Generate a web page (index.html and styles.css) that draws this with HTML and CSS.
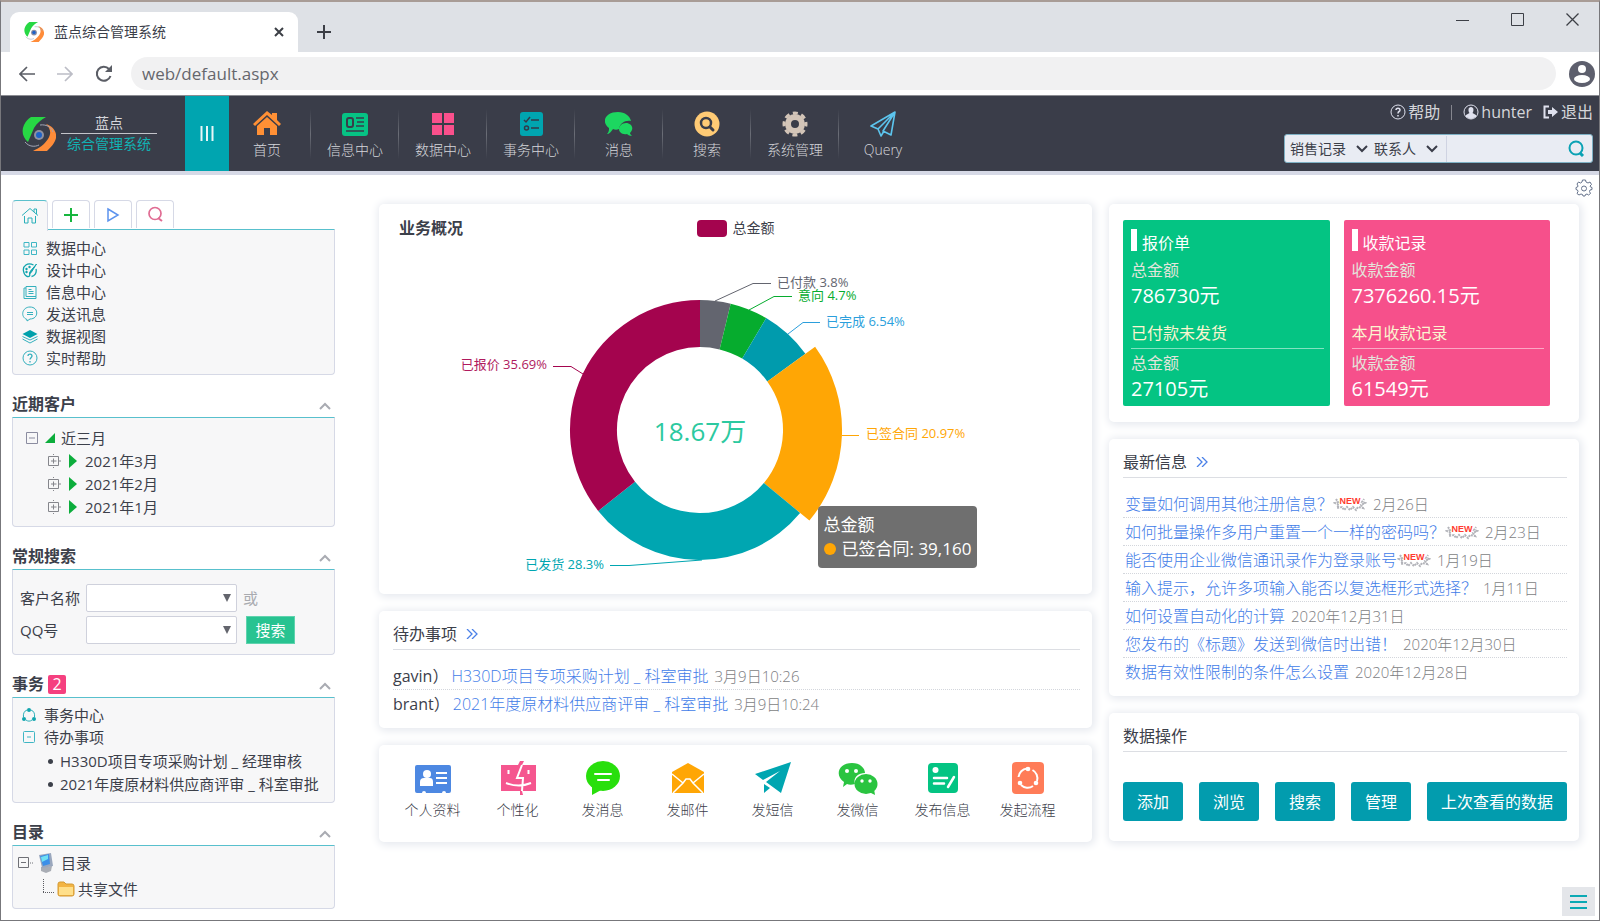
FILE: index.html
```
<!DOCTYPE html>
<html lang="zh-CN">
  <head>
    <meta charset="utf-8">
    <title>蓝点综合管理系统</title>
    <link rel="stylesheet" href="styles.css">
  </head>
  <body>
    <svg class="defs">
      <symbol id="logo" viewBox="0 0 34 34">
        <path fill="#27d844" d="M9 0H24C19 3 15 6 12 11L6 25C1 21-1 14 2 8 4 4 6 2 9 0z"/>
        <path fill="#ff8c39" d="M24 7C31 9 35 15 34 21 33 26 29 30 25 34H11C17 31 22 28 26 22 30 16 28 11 24 7z"/>
        <path fill="none" stroke="#a3a6b5" d="M3 25C7 30 13 30 17 28M18 8C25 7 30 11 31 15"/>
        <circle cx="17" cy="18" r="5" fill="#8d91a3"/>
        <circle cx="17" cy="18" r="3" fill="#1f62c8"/>
      </symbol>
      <symbol id="more" viewBox="0 0 12 10">
        <path fill="none" stroke="#4a80e8" stroke-width="1.300" d="M1 0L6 5 1 10M6 0L11 5 6 10"/>
      </symbol>
      <symbol id="fold" viewBox="0 0 12 8">
        <path fill="none" stroke="#a9abb2" stroke-width="2" d="M1 7L6 2 11 7"/>
      </symbol>
      <symbol id="plusbox" viewBox="0 0 14 14">
        <path fill="none" stroke="#85868c" d="M1.500 2.500H11.500V11.500H1.500zM6.500 0V1M6.500 13V14M12 7H14M4 7H9.500M6.500 4.500V9.500"/>
      </symbol>
      <symbol id="spikes" viewBox="0 0 34 16">
        <path fill="none" stroke="#b3b4ba" stroke-width="2" stroke-dasharray="2 1" d="M3 3L5 6 2 7 6 9 4 12 9 11 11 14 14 11 17 14 20 11 23 14 25 11 30 12 28 9 32 7 29 6 31 3"/>
      </symbol>
    </svg>

    <div class="window">
      <div class="tabstrip">
        <div class="browser-tab">
          <svg width="20" height="20"><use href="#logo"/></svg>
          <span>蓝点综合管理系统</span>
          <button class="plain" aria-label="关闭标签"><svg width="10" height="10"><path d="M1 1L9 9M9 1L1 9" stroke="#3c3f46" stroke-width="2"/></svg></button>
        </div>
        <button class="plain newtab" aria-label="新标签"><svg width="14" height="14"><path d="M7 0V14M0 7H14" stroke="#3c3f46" stroke-width="2"/></svg></button>
        <div class="window-buttons">
          <button class="plain" aria-label="最小化"><svg width="13" height="13"><path d="M0 7.500H13" stroke="#3c3f46"/></svg></button>
          <button class="plain" aria-label="最大化"><svg width="13" height="13"><path d="M.5.5H12.500V12.500H.5z" fill="none" stroke="#3c3f46"/></svg></button>
          <button class="plain" aria-label="关闭"><svg width="13" height="13"><path d="M.5.5L12.500 12.500M12.500.5L.5 12.500" stroke="#3c3f46" stroke-width="1.300"/></svg></button>
        </div>
      </div>
      <div class="addressbar">
        <button class="plain" aria-label="后退"><svg width="16" height="16"><path d="M16 8H1M8 1L1 8 8 15" fill="none" stroke="#5b5e66" stroke-width="1.700"/></svg></button>
        <button class="plain" aria-label="前进"><svg width="16" height="16"><path d="M0 8H15M8 1L15 8 8 15" fill="none" stroke="#bcbdc6" stroke-width="1.700"/></svg></button>
        <button class="plain" aria-label="刷新"><svg width="18" height="18"><path d="M14 4A7 7 0 1 0 15.500 11" fill="none" stroke="#5b5e66" stroke-width="2"/><path d="M17 0V7H10z" fill="#5b5e66"/></svg></button>
        <input class="url" type="text" value="web/default.aspx" aria-label="地址">
        <button class="plain" aria-label="用户"><svg width="26" height="26"><circle cx="13" cy="13" r="13" fill="#5d5f6d"/><circle cx="13" cy="8" r="4" fill="#fff"/><ellipse cx="13" cy="18" rx="8" ry="4" fill="#fff"/></svg></button>
      </div>

      <header class="topbar">
        <a class="brand" href="#">
          <svg width="34" height="34"><use href="#logo"/></svg>
          <span class="brand-text"><span>蓝点</span><span class="brand-sub">综合管理系统</span></span>
        </a>
        <button class="collapse" aria-label="收起菜单"><svg width="14" height="16"><path d="M1.500 0V15M7 0V15M12.500 0V15" stroke="#e8f6f7" stroke-width="2"/></svg></button>
        <nav class="mainnav">
          <a href="#">
            <svg width="28" height="26" viewBox="0 0 28 26"><path fill="#ff9035" d="M19 2H24V9L28 13 26 15 14 4 2 15 0 13 14 0 19 4zM14 6L24 15V24H17V17H11V24H4V15z"/></svg>
            首页
          </a>
          <a href="#">
            <svg width="28" height="26" viewBox="0 0 28 26"><rect x="1" y="2" width="26" height="23" rx="3" fill="#06c384"/><rect x="6" y="7" width="6" height="9" rx="2" fill="none" stroke="#3a3d49" stroke-width="2"/><path d="M15 7H23M16 11H23M15 15H23M5 20H23" stroke="#3a3d49" stroke-width="1.500"/></svg>
            信息中心
          </a>
          <a href="#">
            <svg width="28" height="26" viewBox="0 0 28 26"><path fill="#fa508c" d="M3 2H13V12H3zM15 2H25V12H15zM3 14H13V24H3zM15 14H25V24H15z"/></svg>
            数据中心
          </a>
          <a href="#">
            <svg width="28" height="26" viewBox="0 0 28 26"><rect x="3" y="1" width="23" height="24" rx="3" fill="#00a5b0"/><path d="M7 9L9 11 13 6M14 9H22M14 17H22" fill="none" stroke="#323a48" stroke-width="1.500"/><circle cx="9.500" cy="17" r="2" fill="none" stroke="#323a48" stroke-width="1.500"/></svg>
            事务中心
          </a>
          <a href="#">
            <svg width="28" height="26" viewBox="0 0 28 26"><path fill="#1cd760" d="M13 1C20 1 25 5 26 10 20 9 15 12 14 18 12 19 10 19 8 18 6 21 4 23 2 23 4 21 4 19 4 17-4 11 0 1 13 1z"/><path fill="#1cd760" d="M21 12C26 12 30 17 25 22 25 23 26 24 27 25 25 25 23 24 22 23 17 24 14 21 14 18 14 15 17 12 21 12z"/></svg>
            消息
          </a>
          <a href="#">
            <svg width="28" height="26" viewBox="0 0 28 26"><circle cx="14" cy="13" r="12.500" fill="#ffcb75"/><circle cx="13" cy="12" r="5" fill="none" stroke="#3a3d49" stroke-width="2.500"/><path d="M17 16L20 19" stroke="#3a3d49" stroke-width="3" stroke-linecap="round"/></svg>
            搜索
          </a>
          <a href="#">
            <svg width="28" height="26" viewBox="0 0 28 26"><circle cx="14" cy="13" r="7" fill="none" stroke="#d3c5b8" stroke-width="6"/><circle cx="14" cy="13" r="11" fill="none" stroke="#d3c5b8" stroke-width="3" stroke-dasharray="5 3.640" stroke-dashoffset="2.500"/></svg>
            系统管理
          </a>
          <a href="#">
            <svg width="28" height="26" viewBox="0 0 28 26"><path fill="none" stroke="#5cc5ee" stroke-width="1.600" stroke-linejoin="round" d="M26 1L2 15 9 18 26 1 22 24 14 20 26 1M9 18L12 25 15 20"/></svg>
            Query
          </a>
        </nav>
        <div class="userbox">
          <div class="userlinks">
            <a href="#"><svg width="16" height="16" viewBox="0 0 16 16"><circle cx="8" cy="8" r="7" fill="none" stroke="#dfe1ee"/><path d="M6 6C6 3.500 10 3.500 10 6 10 8 8 7 8 9.500M8 11V12.500" fill="none" stroke="#dfe1ee" stroke-width="1.500"/></svg>帮助</a>
            <span class="bar"></span>
            <a href="#"><svg width="16" height="16" viewBox="0 0 16 16"><circle cx="8" cy="8" r="7" fill="none" stroke="#dfe1ee"/><path d="M8 3C11 3 11 7 9.500 9L13 11V13L8 15 3 13V11L6.500 9C5 7 5 3 8 3z" fill="#dfe1ee"/></svg>hunter</a>
            <a href="#"><svg width="16" height="14" viewBox="0 0 16 14"><path d="M6 1.500H1.500V12.500H6" fill="none" stroke="#dfe1ee" stroke-width="2"/><path d="M5 5H9V2L15 7 9 12V9H5z" fill="#dfe1ee"/></svg>退出</a>
          </div>
          <form class="quicksearch">
            <select class="kind" aria-label="类型"><option>销售记录</option></select>
            <select class="field" aria-label="字段"><option>联系人</option></select>
            <input type="text" aria-label="关键字">
            <button class="plain" type="button" aria-label="搜索"><svg width="17" height="17" viewBox="0 0 17 17"><circle cx="8" cy="8" r="6.500" fill="none" stroke="#0aa2b4" stroke-width="2"/><path d="M12 13L15 16" stroke="#0aa2b4" stroke-width="3"/></svg></button>
          </form>
        </div>
      </header>

      <div class="settings-row">
        <button class="plain" aria-label="设置"><svg width="18" height="18" viewBox="0 0 18 18"><path fill="none" stroke="#66738c" d="M7.500 1H10.500L11 3 13 4 15 3 16.500 5.500 15 7 15.500 8 17 8.500V10.500L15 11 14.500 12.500 15.500 14.500 13.500 16 12 15 10.500 15.500 10 17H8L7.500 15.500 6 15 4 16 2 14.500 3 12.500 2.500 11 1 10.500V8.500L2.500 8 3 7 2 5 3.500 3 5.500 4 7 3z"/><circle cx="9" cy="9.500" r="2.500" fill="none" stroke="#66738c"/></svg></button>
      </div>

      <main class="content">
        <aside class="sidebar">
          <div class="sidetabs">
            <button class="sidetab active" aria-label="首页"><svg width="18" height="18" viewBox="0 0 18 18"><path d="M1 8.500L9 1.500 17 8.500M13 5V2H15.500V7M3.500 9V16H7V11H11V16H14.500V9" fill="none" stroke="#2bb0ba"/></svg></button>
            <button class="sidetab" aria-label="添加"><svg width="14" height="14"><path d="M7 0V14M0 7H14" stroke="#17b63e" stroke-width="2"/></svg></button>
            <button class="sidetab" aria-label="播放"><svg width="14" height="16"><path d="M2 2L12 8 2 14z" fill="none" stroke="#5c93ee" stroke-width="1.500"/></svg></button>
            <button class="sidetab" aria-label="搜索"><svg width="17" height="17"><circle cx="8" cy="7.500" r="6" fill="none" stroke="#e06c93" stroke-width="1.700"/><path d="M11 12L15 15" stroke="#e06c93" stroke-width="2"/></svg></button>
          </div>
          <ul class="box menu">
            <li><a href="#"><svg width="15" height="15" viewBox="0 0 15 15"><path d="M1.500 1.500H6.500V6H1.500zM9 1.500H14V6H9zM1.500 9H6.500V13.500H1.500zM9 9H14V13.500H9z" fill="none" stroke="#3fb6c4"/></svg>数据中心</a></li>
            <li><a href="#"><svg width="15" height="15" viewBox="0 0 15 15"><path d="M11 2C5-1 0 3 1 8 2 14 6 14 7 13 8 12 6 10 8 9M13.500 6C14.500 10 12 13 9 13.500" fill="none" stroke="#12a5ae" stroke-width="1.300"/><path d="M14 1L9 9 7 11 8 8z" fill="#12a5ae" stroke="#12a5ae"/><circle cx="4" cy="6" r="1.200" fill="#12a5ae"/><circle cx="7" cy="4" r="1.200" fill="#12a5ae"/><circle cx="4" cy="9" r="1.200" fill="#12a5ae"/></svg>设计中心</a></li>
            <li><a href="#"><svg width="15" height="15" viewBox="0 0 15 15"><path d="M3.500 1.500H13.500V11.500H3.500zM3.500 3H1.500V13.500H13.500V11.500M6 4.500H9M6 6.500H11M6 8.500H11" fill="none" stroke="#35b0bd"/></svg>信息中心</a></li>
            <li><a href="#"><svg width="16" height="16" viewBox="0 0 16 16"><path d="M5 13.500C-2 11 0 1 8 1 17 1 17 13 8 13L5 15zM5 6.500H11M5 8.500H11" fill="none" stroke="#35b0bd"/></svg>发送讯息</a></li>
            <li><a href="#"><svg width="15" height="15" viewBox="0 0 15 15"><path d="M7.500 1L15 5 7.500 9 0 5z" fill="#00a0ab"/><path d="M0 7.500L7.500 11 15 7.500M0 10L7.500 14 15 10" fill="none" stroke="#35b0bd"/></svg>数据视图</a></li>
            <li><a href="#"><svg width="16" height="16" viewBox="0 0 16 16"><circle cx="8" cy="8" r="7" fill="none" stroke="#35b0bd"/><path d="M6 6C6 3.500 10 3.500 10 6 10 7.500 8 8 8 9.500M8 11V12.500" fill="none" stroke="#35b0bd" stroke-width="1.300"/></svg>实时帮助</a></li>
          </ul>

          <h3 class="side-title">近期客户<svg width="12" height="8"><use href="#fold"/></svg></h3>
          <div class="box tree">
            <div class="tree-row"><svg width="14" height="14"><path d="M1.500 1.500H12.500V12.500H1.500zM4 7H10" fill="none" stroke="#8b8ca0"/></svg><svg width="10" height="10"><path d="M10 0V10H0z" fill="#0cad3c"/></svg>近三月</div>
            <div class="tree-row sub"><svg width="14" height="14"><use href="#plusbox"/></svg><svg width="8" height="14"><path d="M0 0L8 7 0 14z" fill="#0cad3c"/></svg>2021年3月</div>
            <div class="tree-row sub"><svg width="14" height="14"><use href="#plusbox"/></svg><svg width="8" height="14"><path d="M0 0L8 7 0 14z" fill="#0cad3c"/></svg>2021年2月</div>
            <div class="tree-row sub"><svg width="14" height="14"><use href="#plusbox"/></svg><svg width="8" height="14"><path d="M0 0L8 7 0 14z" fill="#0cad3c"/></svg>2021年1月</div>
          </div>

          <h3 class="side-title">常规搜索<svg width="12" height="8"><use href="#fold"/></svg></h3>
          <form class="box searchform">
            <label for="customer">客户名称</label>
            <select id="customer"><option></option></select>
            <span class="or">或</span>
            <label for="qq">QQ号</label>
            <select id="qq"><option></option></select>
            <button type="button" class="btn-green">搜索</button>
          </form>

          <h3 class="side-title">事务<span class="count">2</span><svg width="12" height="8"><use href="#fold"/></svg></h3>
          <div class="box tasks">
            <a href="#"><svg width="14" height="14" viewBox="0 0 14 14"><path d="M5 2C2 3 1 6 1.500 9M9 2C12 3 13 6 12.500 9M4 12C6 13.500 8 13.500 10 12" fill="none" stroke="#2bb0ba"/><circle cx="7" cy="2" r="2" fill="#12a5ae"/><circle cx="2" cy="11" r="2" fill="#12a5ae"/><circle cx="12" cy="11" r="2" fill="#12a5ae"/></svg>事务中心</a>
            <a href="#"><svg width="14" height="14"><rect x="1.500" y="1.500" width="11" height="11" rx="1" fill="none" stroke="#3fb6c4"/><path d="M5 7H9" stroke="#3fb6c4"/></svg>待办事项</a>
            <ul>
              <li><a href="#">H330D项目专项采购计划 _ 经理审核</a></li>
              <li><a href="#">2021年度原材料供应商评审 _ 科室审批</a></li>
            </ul>
          </div>

          <h3 class="side-title">目录<svg width="12" height="8"><use href="#fold"/></svg></h3>
          <div class="box catalog">
            <div class="cat-row"><svg width="16" height="12"><path d="M.5.5H10.500V10.500H.5zM3 5.500H8" fill="none" stroke="#6f7076"/><path d="M12 6H16" stroke="#6f7076" stroke-dasharray="1 1"/></svg><svg class="cat-pc" width="16" height="20" viewBox="0 0 16 20"><path d="M3 14L14 13 13 18 8 20 3 18z" fill="#a9adb5"/><path d="M1 2L13 0 15 13 4 15z" fill="#9aa7bd"/><path d="M2 3L11 1 12 11 5 13z" fill="#3c8fe8"/><path d="M3 4L10 2 10 6 4 9z" fill="#6fe0f4"/></svg>目录</div>
            <div class="cat-row sub"><svg width="12" height="20"><path d="M1.500 0V14M1 13.500H12" fill="none" stroke="#5b5c62" stroke-dasharray="1 1"/></svg><svg width="18" height="16" viewBox="0 0 18 16"><path d="M1 3Q1 1 3 1H7L9 3H15Q17 3 17 5V13Q17 15 15 15H3Q1 15 1 13z" fill="#f3b443" stroke="#d39a35"/><path d="M2 6H16V14H2z" fill="#ffdf8a"/></svg>共享文件</div>
          </div>
        </aside>

        <section class="center">
          <div class="card chart-card">
            <div class="chart-head"><h2>业务概况</h2><div class="legend"><i></i>总金额</div></div>
            <div class="chart">
              <svg class="pie" height="350" viewBox="0 0 713 350">
                <path fill="#63656f" d="M321 56A130 130 0 0 1 351.700 59.700L340.600 105.400A83 83 0 0 0 321 103z"/>
                <path fill="#06ac2e" d="M351.700 59.700A130 130 0 0 1 387.200 74.100L363.200 114.600A83 83 0 0 0 340.600 105.400z"/>
                <path fill="#009bad" d="M387.200 74.100A130 130 0 0 1 426.400 109.800L388.300 137.400A83 83 0 0 0 363.200 114.600z"/>
                <path fill="#ffa605" d="M436.100 102.800A142 142 0 0 1 430.400 276.600L384.900 239A83 83 0 0 0 388.300 137.400z"/>
                <path fill="#00a6b1" d="M421.100 268.900A130 130 0 0 1 219.200 266.900L256 237.700A83 83 0 0 0 384.900 239z"/>
                <path fill="#a4044e" d="M219.200 266.900A130 130 0 0 1 321 56V103A83 83 0 0 0 256 237.700z"/>
                <g fill="none">
                  <path stroke="#63656f" d="M336 57L374 39.500H392"/>
                  <path stroke="#06ac2e" d="M370 66L395 52.500H413"/>
                  <path stroke="#2b9fdc" d="M409 90L424 78.500H441"/>
                  <path stroke="#ffa605" d="M463 191.500H480"/>
                  <path stroke="#00a6b1" d="M323 316L250 321.500H231"/>
                  <path stroke="#a4044e" d="M204 130L192 122.500H174"/>
                </g>
                <g class="labels">
                  <text x="398" y="43" fill="#63656f">已付款 3.8%</text>
                  <text x="419" y="56" fill="#06ac2e">意向 4.7%</text>
                  <text x="447" y="82" fill="#2b9fdc">已完成 6.54%</text>
                  <text x="487" y="194" fill="#ffa605">已签合同 20.97%</text>
                  <text x="225" y="325" fill="#00a6b1" text-anchor="end">已发货 28.3%</text>
                  <text x="168" y="125" fill="#b01a5e" text-anchor="end">已报价 35.69%</text>
                </g>
                <text class="total" x="321" y="197" text-anchor="middle">18.67万</text>
              </svg>
              <div class="tooltip">总金额<br><i></i>已签合同: 39,160</div>
            </div>
          </div>

          <div class="card">
            <h2 class="card-title">待办事项<a href="#" aria-label="更多"><svg width="12" height="10"><use href="#more"/></svg></a></h2>
            <ul class="list todo">
              <li>gavin）<a href="#">H330D项目专项采购计划 _ 科室审批</a><time>3月9日10:26</time></li>
              <li>brant）<a href="#">2021年度原材料供应商评审 _ 科室审批</a><time>3月9日10:24</time></li>
            </ul>
          </div>

          <div class="card shortcuts">
            <a href="#"><svg width="40" height="36" viewBox="0 0 40 36"><path fill="#4d88e2" d="M4 5H36Q38 5 38 7V31Q38 33 36 33H33Q33 31 31 31 29 31 29 33H13Q13 31 11 31 9 31 9 33H4Q2 33 2 31V7Q2 5 4 5z"/><circle cx="14" cy="14" r="4" fill="#fff"/><path d="M7 26V22Q7 18 11 18H17Q20 18 20 22V26z" fill="#fff"/><path d="M23 13H34M23 18H34M23 23H34" stroke="#fff" stroke-width="2"/></svg>个人资料</a>
            <a href="#"><svg width="40" height="36" viewBox="0 0 40 36"><path fill="#f5568f" d="M3 5H38V31H24L25 35H22V31H3z"/><path fill="#f5568f" d="M22 1H26L24 5H20z"/><path d="M24 5L19 18H25L24 31M10.500 10V14M30.500 10V14M8 23Q21 28 33 23" fill="none" stroke="#fff" stroke-width="2"/></svg>个性化</a>
            <a href="#"><svg width="40" height="36" viewBox="0 0 40 36"><ellipse cx="20" cy="16" rx="17" ry="15" fill="#28df0c"/><path d="M9 26V35L20 29z" fill="#28df0c"/><path d="M12 14H28M15 20H26" stroke="#fff" stroke-width="2" stroke-linecap="round"/></svg>发消息</a>
            <a href="#"><svg width="40" height="36" viewBox="0 0 40 36"><path fill="#ffa605" d="M4 12L20 3 36 12V33H4z"/><path d="M4 14L15 23 5 33M36 14L25 23 35 33M15 23L18 19H22L25 23" fill="none" stroke="#fff" stroke-width="1.500"/></svg>发邮件</a>
            <a href="#"><svg width="40" height="36" viewBox="0 0 40 36"><path fill="#00a6b1" d="M38 2L2 14 10 20 27 11 13 22 28 33z"/><path fill="#00a6b1" d="M11 24L17 28 11 33z"/></svg>发短信</a>
            <a href="#"><svg width="40" height="36" viewBox="0 0 40 36"><path fill="#2ac440" d="M14 3C22 3 27 8 27 13 19 13 15 19 17 24 14 25 11 25 9 24L5 27 6 22C-4 15 1 3 14 3z"/><ellipse cx="28" cy="24" rx="11.500" ry="10" fill="#2ac440"/><path fill="#2ac440" d="M31 32L37 35 36 29z"/><g fill="#fff"><circle cx="9" cy="11" r="2"/><circle cx="18" cy="11" r="2"/><circle cx="24" cy="21" r="1.700"/><circle cx="32" cy="21" r="1.700"/></g></svg>发微信</a>
            <a href="#"><svg width="40" height="36" viewBox="0 0 40 36"><rect x="5" y="3" width="30" height="30" rx="4" fill="#04c483"/><circle cx="12.500" cy="10" r="3" fill="#fff"/><path d="M11 18H24M11 23.500H21M25 27L31 17" stroke="#fff" stroke-width="2.500" stroke-linecap="round"/></svg>发布信息</a>
            <a href="#"><svg width="40" height="36" viewBox="0 0 40 36"><rect x="4" y="2" width="32" height="32" rx="4" fill="#ff7c58"/><path d="M10.500 17A9.500 9.500 0 0 1 19 8.500M24.500 10A9.500 9.500 0 0 1 29 21M13 25A9.500 9.500 0 0 0 25 26" fill="none" stroke="#fff" stroke-width="2"/><g fill="#fff"><circle cx="20" cy="9" r="2.300"/><circle cx="12" cy="23" r="2.300"/><circle cx="28" cy="23" r="2.300"/></g></svg>发起流程</a>
          </div>
        </section>

        <section class="right">
          <div class="card tiles">
            <div class="tile green">
              <h2>报价单</h2>
              <p>总金额</p>
              <strong>786730元</strong>
              <h3>已付款未发货</h3>
              <p>总金额</p>
              <strong>27105元</strong>
            </div>
            <div class="tile pink">
              <h2>收款记录</h2>
              <p>收款金额</p>
              <strong>7376260.15元</strong>
              <h3>本月收款记录</h3>
              <p>收款金额</p>
              <strong>61549元</strong>
            </div>
          </div>

          <div class="card">
            <h2 class="card-title">最新信息<a href="#" aria-label="更多"><svg width="12" height="10"><use href="#more"/></svg></a></h2>
            <ul class="list news">
              <li><a href="#">变量如何调用其他注册信息？</a><svg width="34" height="16"><use href="#spikes"/><text x="17" y="8" text-anchor="middle" class="new-text">NEW</text></svg><time>2月26日</time></li>
              <li><a href="#">如何批量操作多用户重置一个一样的密码吗？</a><svg width="34" height="16"><use href="#spikes"/><text x="17" y="8" text-anchor="middle" class="new-text">NEW</text></svg><time>2月23日</time></li>
              <li><a href="#">能否使用企业微信通讯录作为登录账号</a><svg width="34" height="16"><use href="#spikes"/><text x="17" y="8" text-anchor="middle" class="new-text">NEW</text></svg><time>1月19日</time></li>
              <li><a href="#">输入提示，允许多项输入能否以复选框形式选择？</a><time>1月11日</time></li>
              <li><a href="#">如何设置自动化的计算</a><time>2020年12月31日</time></li>
              <li><a href="#">您发布的《标题》发送到微信时出错！</a><time>2020年12月30日</time></li>
              <li><a href="#">数据有效性限制的条件怎么设置</a><time>2020年12月28日</time></li>
            </ul>
          </div>

          <div class="card">
            <h2 class="card-title">数据操作</h2>
            <div class="actions">
              <button>添加</button>
              <button>浏览</button>
              <button>搜索</button>
              <button>管理</button>
              <button>上次查看的数据</button>
            </div>
          </div>
        </section>
      </main>
      <button class="floating" aria-label="菜单"><svg width="17" height="14"><path d="M0 1H17M0 7H17M0 13H17" stroke="#0ba9b4" stroke-width="2"/></svg></button>
    </div>
  </body>
</html>
```
FILE: styles.css
```
* {
  box-sizing: border-box;
}
body {
  margin: 0;
  font-family: "Open Sans", "Noto Sans CJK SC", sans-serif;
  font-size: 15px;
  line-height: 22px;
  color: #3c404a;
  background: #fff;
}
a {
  color: inherit;
  text-decoration: none;
}
h2, h3, p, ul {
  margin: 0;
  padding: 0;
}
ul {
  list-style: none;
}
svg {
  display: block;
  flex: none;
}
button, input, select {
  font: inherit;
  color: inherit;
  margin: 0;
}
.defs {
  position: absolute;
  width: 0;
  height: 0;
}
.plain {
  border: 0;
  padding: 0;
  background: none;
}
.window {
  position: relative;
  min-height: 100vh;
  border: 1px solid #77777b;
  border-top: 2px solid #a89c96;
}

/* browser chrome */
.tabstrip {
  display: flex;
  height: 50px;
  padding: 10px 20px 0 9px;
  background: #dee1e6;
}
.browser-tab {
  display: flex;
  align-items: center;
  gap: 10px;
  width: 288px;
  padding: 0 14px;
  border-radius: 9px 9px 0 0;
  background: #fff;
  font-size: 14px;
}
.browser-tab span {
  flex: 1;
}
.newtab {
  margin-left: 19px;
}
.window-buttons {
  display: flex;
  align-items: flex-start;
  gap: 42px;
  margin-left: auto;
  padding-top: 1px;
}
.window-buttons button {
  height: 13px;
}
.addressbar {
  display: flex;
  align-items: center;
  gap: 22px;
  height: 43px;
  padding: 0 4px 0 18px;
}
.url {
  flex: 1;
  height: 33px;
  margin: 0 -9px 0 -4px;
  padding: 0 11px;
  border: 0;
  border-radius: 17px;
  background: #f1f1f2;
  color: #66676d;
  font-size: 17px;
}

/* top bar */
.topbar {
  display: flex;
  height: 80px;
  background: #3a3d49;
  border-top: 1px solid #8b8c92;
  border-bottom: 4px solid #d6d9e6;
  color: #d5d6da;
}
.brand {
  display: flex;
  align-items: center;
  gap: 5px;
  width: 184px;
  padding-left: 21px;
  font-size: 14px;
}
.brand-text {
  width: 96px;
  text-align: center;
}
.brand-text span {
  display: block;
  line-height: 20px;
}
.brand-text .brand-sub {
  border-top: 1px solid #c3c4ca;
  color: #12b1b3;
}
.collapse {
  display: flex;
  align-items: center;
  justify-content: center;
  width: 44px;
  padding: 0;
  border: 0;
  background: #00a5b0;
}
.mainnav {
  display: flex;
  margin-left: -6px;
  font-size: 14px;
  font-weight: 300;
}
.mainnav a {
  display: flex;
  flex-direction: column;
  align-items: center;
  gap: 2px;
  min-width: 88px;
  padding: 15px 16px 0;
  background: linear-gradient(#3a3d49, #6b6e77, #3a3d49) right 50% / 1px 50px no-repeat;
}
.mainnav a:last-child {
  background: none;
}
.userbox {
  display: flex;
  flex-direction: column;
  align-items: flex-end;
  gap: 11px;
  margin-left: auto;
  padding: 5px 6px 0 0;
}
.userlinks {
  display: flex;
  align-items: center;
  gap: 11px;
  font-size: 16px;
}
.userlinks a {
  display: flex;
  align-items: center;
  gap: 2px;
}
.userlinks .bar {
  width: 1px;
  height: 15px;
  background: #85868e;
}
.quicksearch {
  display: flex;
  align-items: center;
  width: 309px;
  height: 29px;
  padding: 0 7px 0 5px;
  border: 1px solid #7db0c4;
  border-radius: 3px;
  background: #e9ecf3;
  color: #3c404a;
  font-size: 14px;
}
select {
  appearance: none;
  border: 0;
  background: none;
  background-repeat: no-repeat;
}
.quicksearch select {
  height: 26px;
  padding: 0;
  background-image: url("data:image/svg+xml,%3Csvg xmlns='http://www.w3.org/2000/svg' width='12' height='8'%3E%3Cpath d='M1 1L6 6L11 1' fill='none' stroke='%233a3d49' stroke-width='2'/%3E%3C/svg%3E");
  background-position: right center;
}
.quicksearch .kind {
  width: 78px;
  margin-right: 6px;
}
.quicksearch .field {
  width: 64px;
}
.quicksearch input {
  flex: 1;
  min-width: 0;
  height: 26px;
  margin-left: 8px;
  border: 0;
  border-left: 1px solid #cfd3e2;
  background: none;
}
.settings-row {
  display: flex;
  justify-content: flex-end;
  align-items: center;
  height: 25px;
  padding-right: 6px;
}

/* page */
.content {
  display: flex;
  gap: 17px;
  padding: 0 20px 0 11px;
}
.sidebar {
  flex: 0 0 323px;
  margin-right: 27px;
}
.center, .right {
  display: flex;
  flex-direction: column;
  gap: 17px;
  padding-top: 4px;
}
.center {
  flex: 1;
  min-width: 0;
}
.right {
  flex: 0 0 470px;
}

/* sidebar */
.sidetabs {
  display: flex;
  gap: 4px;
}
.sidetab {
  display: flex;
  align-items: center;
  justify-content: center;
  width: 38px;
  height: 28px;
  padding: 0;
  border: 1px solid #d6d9e6;
  border-bottom: 0;
  border-radius: 4px 4px 0 0;
  background: #fff;
}
.sidetab.active {
  position: relative;
  height: 31px;
  margin-bottom: -2px;
  width: 36px;
  border-top-color: #5cc0cc;
  background: #f7f7f8;
}
.box {
  border: 1px solid #d6d9e6;
  border-top: 1px solid #58c0cd;
  border-radius: 0 0 4px 4px;
  background: #f7f7f8;
}
.menu {
  padding: 7px 9px 5px;
}
.menu a, .tasks > a {
  display: flex;
  align-items: center;
  gap: 8px;
  height: 22px;
}
.menu svg {
  width: 16px;
}
.side-title {
  display: flex;
  align-items: center;
  height: 42px;
  padding: 16px 4px 0 0;
  line-height: 24px;
  font-size: 16px;
}
.side-title svg {
  margin-top: 4px;
  margin-left: auto;
}
.tree {
  padding: 8px 12px 8px;
}
.tree-row {
  display: flex;
  align-items: center;
  gap: 6px;
  height: 23px;
}
.tree-row.sub {
  gap: 8px;
  padding-left: 22px;
}
.searchform {
  display: grid;
  grid-template-columns: 66px 151px auto;
  gap: 4px 0;
  align-items: center;
  justify-content: start;
  padding: 14px 7px 10px;
}
.searchform select {
  height: 28px;
  border: 1px solid #cfd1dc;
  border-radius: 2px;
  background-color: #fff;
  background-image: url("data:image/svg+xml,%3Csvg xmlns='http://www.w3.org/2000/svg' width='8' height='8'%3E%3Cpath d='M0 0H8L4 8z' fill='%2363656d'/%3E%3C/svg%3E");
  background-position: right 5px center;
}
.or {
  padding-left: 6px;
  color: #a9abb0;
}
.btn-green {
  width: 49px;
  height: 28px;
  margin-left: 9px;
  padding: 0;
  border: 1px solid #5fd3ae;
  background: #28c391;
  color: #fff;
}
.count {
  width: 18px;
  margin-left: 4px;
  border-radius: 2px;
  background: #f5407f;
  color: #fff;
  font-weight: 400;
  line-height: 19px;
  text-align: center;
}
.tasks {
  padding: 6px 9px 6px;
}
.tasks ul {
  padding-top: 2px;
  padding-left: 38px;
}
.tasks li {
  position: relative;
  line-height: 23px;
  white-space: nowrap;
}
.tasks li::before {
  content: "";
  position: absolute;
  left: -12px;
  top: 9px;
  width: 5px;
  height: 5px;
  border-radius: 50%;
  background: #3c404a;
}
.catalog {
  padding: 4px 5px 6px;
}
.cat-row {
  display: flex;
  align-items: center;
  gap: 4px;
  height: 26px;
}
.cat-pc {
  margin-right: 3px;
}
.cat-row.sub {
  padding-left: 24px;
  gap: 3px;
}

/* cards */
.card {
  border-radius: 5px;
  background: #fff;
  box-shadow: 1px 1px 8px 2px #e6e9ef;
}
.card-title {
  display: flex;
  align-items: center;
  gap: 9px;
  height: 39px;
  margin: 0 12px 12px 14px;
  padding-top: 7px;
  border-bottom: 1px solid #dcdee3;
  font-size: 16px;
  font-weight: 400;
}
.list {
  padding: 0 12px 10px 14px;
  font-size: 16px;
}
.list li {
  display: flex;
  align-items: center;
  height: 28px;
  border-bottom: 1px dotted #d3d6dc;
  white-space: nowrap;
}
.list li:last-child {
  border-bottom-color: transparent;
}
.list a {
  color: #3f7ce8;
  font-weight: 300;
}
.todo a {
  margin-left: 3px;
}
.list time {
  margin-left: 6px;
  font-size: 15px;
  font-weight: 300;
  color: #7d7e83;
}
.news li {
  padding-left: 2px;
}
.new-text {
  font: bold 9px "Liberation Sans", sans-serif;
  fill: #ff3b30;
}

/* chart */
.chart-head {
  display: grid;
  grid-template-columns: 1fr auto 1fr;
  align-items: center;
  height: 40px;
  padding: 8px 20px 0;
}
.chart-head h2 {
  font-size: 16px;
}
.legend {
  display: flex;
  align-items: center;
  gap: 6px;
  font-size: 14px;
}
.legend i {
  width: 30px;
  height: 17px;
  border-radius: 4px;
  background: #a4044e;
}
.chart {
  position: relative;
}
.pie {
  width: 100%;
}
.labels {
  font-size: 13px;
}
.total {
  font-size: 26px;
  fill: #2cc9a0;
}
.tooltip {
  position: absolute;
  left: calc(50% + 82px);
  top: 262px;
  padding: 7px 6px;
  border-radius: 4px;
  background: rgba(100, 100, 100, .93);
  color: #fff;
  font-size: 17px;
  line-height: 24px;
  white-space: nowrap;
}
.tooltip i {
  display: inline-block;
  width: 12px;
  height: 12px;
  margin-right: 6px;
  border-radius: 50%;
  background: #ffa605;
}

.shortcuts {
  display: flex;
  height: 97px;
  padding: 15px 22px 0 11px;
}
.shortcuts a {
  flex: 1;
  display: flex;
  flex-direction: column;
  align-items: center;
  gap: 3px;
  font-size: 14px;
  font-weight: 300;
}

/* right column */
.tiles {
  display: flex;
  gap: 14px;
  padding: 16px 29px 16px 14px;
}
.tile {
  flex: 1;
  height: 186px;
  padding: 9px 6px 0 8px;
  border-radius: 2px;
  color: #fff;
  font-size: 16px;
}
.tile.green {
  background: #04c483;
}
.tile.pink {
  background: #f6508b;
}
.tile h2 {
  padding: 3px 0 2px 11px;
  background: linear-gradient(#fff, #fff) left top / 6px 22px no-repeat;
  font-size: 16px;
  font-weight: 400;
  line-height: 22px;
}
.tile h3 {
  height: 28px;
  margin-top: 11px;
  border-bottom: 1px solid rgba(255, 255, 255, .5);
  color: #fbf5d0;
  font-size: 16px;
  font-weight: 400;
  line-height: 24px;
}
.tile p {
  padding-top: 3px;
  color: #e3e5dc;
  line-height: 22px;
}
.tile strong {
  display: block;
  padding-top: 1px;
  font-size: 20px;
  font-weight: 400;
  line-height: 28px;
}
.actions {
  display: flex;
  justify-content: space-between;
  padding: 18px 12px 20px 14px;
}
.actions button {
  height: 39px;
  padding: 0 14px;
  border: 0;
  border-radius: 3px;
  background: #029cae;
  color: #fff;
  font-size: 16px;
}
.floating {
  position: fixed;
  right: 5px;
  bottom: 5px;
  display: flex;
  align-items: center;
  justify-content: center;
  width: 33px;
  height: 29px;
  padding: 0;
  border: 0;
  background: #e4e6ea;
}
```
